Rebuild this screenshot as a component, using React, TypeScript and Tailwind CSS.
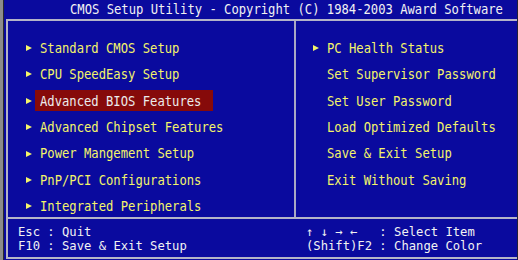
const LEFT = [
  { label: "Standard CMOS Setup", arrow: true },
  { label: "CPU SpeedEasy Setup", arrow: true },
  { label: "Advanced BIOS Features", arrow: true, selected: true },
  { label: "Advanced Chipset Features", arrow: true },
  { label: "Power Mangement Setup", arrow: true },
  { label: "PnP/PCI Configurations", arrow: true },
  { label: "Integrated Peripherals", arrow: true },
];

const RIGHT = [
  { label: "PC Health Status", arrow: true },
  { label: "Set Supervisor Password" },
  { label: "Set User Password" },
  { label: "Load Optimized Defaults" },
  { label: "Save & Exit Setup" },
  { label: "Exit Without Saving" },
];

type Item = { label: string; arrow?: boolean; selected?: boolean };

function Arrow() {
  return (
    <svg width="6" height="6" viewBox="0 0 6 6" className="shrink-0">
      <polygon points="0,0 6,3 0,6" fill="#f4f46a" />
    </svg>
  );
}

function Txt({ children }: { children: React.ReactNode }) {
  return <span className="inline-block origin-center scale-y-[1.15] whitespace-pre">{children}</span>;
}

function MenuRow({ item, indent }: { item: Item; indent: string }) {
  return (
    <div className={`flex h-[21px] items-center ${indent}`}>
      {item.arrow ? <Arrow /> : <span className="w-[6px] shrink-0" />}
      <div
        className={`ml-[3px] flex h-full items-center pl-[5px] pr-[12px] ${
          item.selected ? "bg-[#860a0a] text-[#ececec]" : "text-[#f4f46a]"
        }`}
      >
        <Txt>{item.label}</Txt>
      </div>
    </div>
  );
}

export default function App() {
  return (
    <div
      className="flex h-[260px] w-[518px] overflow-hidden bg-[#8c8c8c] text-[12.2px] leading-none"
      style={{ fontFamily: '"DejaVu Sans Mono", "Liberation Mono", monospace' }}
    >
      <div className="w-[3px] shrink-0" />
      <div className="w-px shrink-0 bg-[#2a2a2a]" />
      <div className="flex w-[513px] flex-col bg-[#0a0a9e]">
        {/* title */}
        <div className="flex h-[19px] items-center pl-[66px] text-[#f2f2f2]">
          <Txt>CMOS Setup Utility - Copyright (C) 1984-2003 Award Software</Txt>
        </div>

        <div className="ml-[2px] flex flex-col border-t-2 border-b-2 border-l-2 border-[#b4b4c8]">
          {/* menus */}
          <div className="flex h-[196px]">
            <div className="flex w-[288px] flex-col gap-[5.4px] border-r-2 border-[#a8a8c4] pt-[16.5px]">
              {LEFT.map((it) => (
                <MenuRow key={it.label} item={it} indent="pl-[18px]" />
              ))}
            </div>
            <div className="flex flex-1 flex-col gap-[5.4px] pt-[16.5px]">
              {RIGHT.map((it) => (
                <MenuRow key={it.label} item={it} indent="pl-[17px]" />
              ))}
            </div>
          </div>

          {/* footer */}
          <div className="flex h-[40px] border-t-2 border-[#b4b4c8] pt-[7px] leading-[13.5px] whitespace-pre text-[#f2f2f2]">
            <div className="flex w-[288px] flex-col pl-[10px]">
              <span>Esc : Quit</span>
              <span>F10 : Save &amp; Exit Setup</span>
            </div>
            <div className="flex flex-col pl-[10px]">
              <span>↑ ↓ → ←   : Select Item</span>
              <span>(Shift)F2 : Change Color</span>
            </div>
          </div>
        </div>
      </div>
      <div className="w-px shrink-0 bg-[#202038]" />
    </div>
  );
}
